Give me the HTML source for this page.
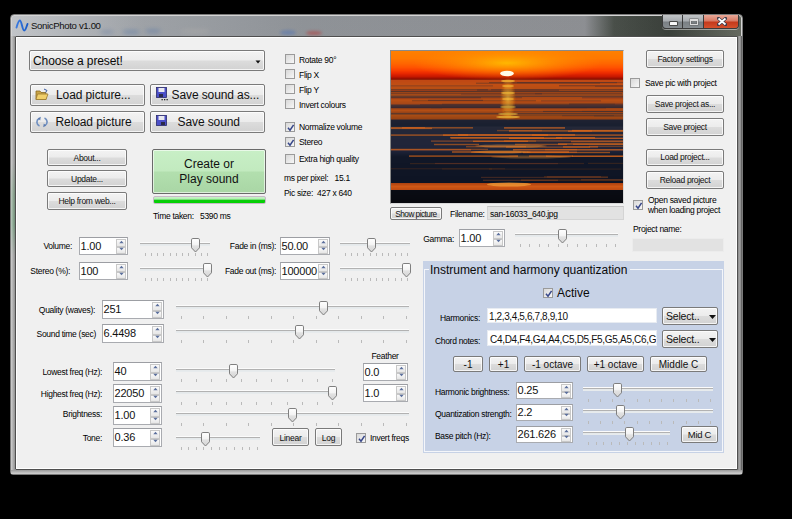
<!DOCTYPE html><html><head><meta charset="utf-8"><title>SonicPhoto</title><style>
*{margin:0;padding:0;box-sizing:border-box}
html,body{width:792px;height:519px;overflow:hidden;background:#000}
body{position:relative;font-family:"Liberation Sans",sans-serif;color:#000}
.a{position:absolute}
.t{position:absolute;font-size:8.5px;letter-spacing:-0.3px;white-space:nowrap;line-height:10px;color:#000;padding-top:1px}
.btn{position:absolute;border:1px solid #7a7a7a;border-radius:2px;
 background:linear-gradient(#f3f3f3 0%,#ececec 48%,#dcdcdc 52%,#d2d2d2 100%);
 box-shadow:inset 0 0 0 1px rgba(255,255,255,.75);
 text-align:center;white-space:nowrap;color:#111;font-size:8.5px;letter-spacing:-0.3px}
.big{font-size:12px;letter-spacing:-0.1px}
.cb{position:absolute;width:10px;height:10px;border:1px solid #9a9a9a;
 background:linear-gradient(135deg,#d8d8d8,#f7f7f7)}
.cb svg{position:absolute;left:0;top:0}
.spin{position:absolute;border:1px solid #a9abb0;border-top-color:#9c9ea3;background:#fff;overflow:hidden}
.spin .v{position:absolute;left:0.5px;font-size:12px;white-space:nowrap;color:#111}
.sb{position:absolute;right:1px;width:10px;border:1px solid #c8c8c8;background:linear-gradient(#fafafa,#e6e6e6)}
.tr{position:absolute;height:4px;background:linear-gradient(#fbfbfb 0%,#fbfbfb 25%,#b2b2b2 25%,#b2b2b2 50%,#e4e8ea 50%,#e8ecee 100%)}
.tk{position:absolute;width:1px;height:3px;background:#bababa}
</style></head><body>
<svg width="0" height="0" style="position:absolute"><defs><linearGradient id="tg" x1="0" y1="0" x2="0" y2="1"><stop offset="0" stop-color="#ffffff"/><stop offset="0.45" stop-color="#f4f4f4"/><stop offset="0.55" stop-color="#e2e2e2"/><stop offset="1" stop-color="#d4d4d4"/></linearGradient></defs></svg>
<div class="a" style="left:10px;top:14px;width:733px;height:461px;border-radius:4px 4px 3px 3px;
background:linear-gradient(rgba(0,0,0,.04),rgba(255,255,255,.06)),linear-gradient(90deg,#c9ccd0 0%,#a4a8ad 18%,#94989d 40%,#929498 78.5%,#4c524c 82.5%,#3c423c 90%,#6a6e64 100%);
border:1px solid #7a7a7a;box-shadow:inset 0 0 0 1px #d4d4d4"></div>
<div class="a" style="left:11px;top:36px;width:4px;height:438px;background:linear-gradient(90deg,rgba(255,255,255,.45),rgba(255,255,255,.1) 50%,rgba(0,0,0,.12)),linear-gradient(#a6a6a6 0%,#a6a6a6 29%,#88a08c 36%,#80a088 43%,#a6a6a6 50%,#a8a8a8 100%)"></div>
<div class="a" style="left:738px;top:36px;width:4px;height:438px;background:linear-gradient(90deg,#8a8a8a,#a8a8a8 50%,#505050)"></div>
<div class="a" style="left:11px;top:470px;width:731px;height:4px;background:linear-gradient(#9a9a9a,#bdbdbd 60%,#d0d0d0)"></div>
<div class="a" style="left:15px;top:36px;width:723px;height:434px;border:1px solid #4f4f4f;border-radius:1px;background:#f0f0f0;box-shadow:inset 0 0 0 1px #fff"></div>
<div class="a" style="left:100px;top:29px;width:200px;height:7px;filter:blur(2px);opacity:.7"><div class="a" style="left:0;top:1px;width:14px;height:4px;background:#7f8fa8;border-radius:50%"></div><div class="a" style="left:22px;top:1px;width:18px;height:4px;background:#6f86a8;border-radius:50%"></div><div class="a" style="left:45px;top:0px;width:16px;height:4px;background:#6e84a6;border-radius:50%"></div><div class="a" style="left:80px;top:0px;width:30px;height:5px;background:#a8a8a8;border-radius:50%"></div></div>
<div class="a" style="left:270px;top:28px;width:60px;height:8px;filter:blur(1.5px);opacity:.6"><div class="a" style="left:10px;top:2px;width:16px;height:5px;background:#5a78b0;border-radius:50%"></div><div class="a" style="left:36px;top:3px;width:16px;height:4px;background:#b04040;border-radius:50%"></div></div>
<svg class="a" style="left:14px;top:18px" width="16" height="16" viewBox="0 0 16 16">
<defs><linearGradient id="ig" x1="0" y1="0" x2="1" y2="0"><stop offset="0" stop-color="#3a7ae0"/><stop offset="1" stop-color="#1a5cc8"/></linearGradient></defs><path d="M2.5,9.5 C3.5,6 4.5,2.5 5.8,2.5 C7.8,2.5 8.2,12.5 10.2,12.5 C11.5,12.5 12.5,8.5 13.5,6" fill="none" stroke="url(#ig)" stroke-width="1.9" stroke-linecap="round"/></svg>
<div class="t" style="left:31px;top:19px;font-size:9.6px;letter-spacing:-0.35px;color:#101010;line-height:12px">SonicPhoto v1.00</div>
<div class="a" style="left:662px;top:15px;width:77px;height:14px;border:1px solid #3a3a3a;border-top:none;border-radius:0 0 4px 4px;overflow:hidden;box-shadow:0 1px 0 rgba(255,255,255,.45)">
<div class="a" style="left:0;top:0;width:20px;height:13px;background:linear-gradient(#c0c4c6 0%,#a8acb0 45%,#7a8084 55%,#868c90 100%);border-right:1px solid #3a3a3a"></div>
<div class="a" style="left:20px;top:0;width:21px;height:13px;background:linear-gradient(#c0c4c6 0%,#a8acb0 45%,#7a8084 55%,#868c90 100%);border-right:1px solid #3a3a3a"></div>
<div class="a" style="left:41px;top:0;width:36px;height:13px;background:linear-gradient(#e8a898 0%,#d87a64 45%,#c43a1c 55%,#d4502c 100%)"></div>
<div class="a" style="left:7px;top:7px;width:7px;height:2.5px;background:#f8f8f8;border-radius:0.5px;box-shadow:0 0 0 1px #4a4a4a"></div>
<div class="a" style="left:26.5px;top:3.5px;width:8.5px;height:6px;border:1.5px solid #dcdcdc;border-top-width:2px;box-shadow:0 0 0 0.5px #666, inset 0 0 0 0.5px #666"></div>
<svg class="a" style="left:54px;top:2px" width="10" height="9" viewBox="0 0 10 9"><path d="M1.5,1.5 L8.5,7.5 M8.5,1.5 L1.5,7.5" stroke="#3a3a4a" stroke-width="3.2" stroke-linecap="square"/><path d="M1.5,1.5 L8.5,7.5 M8.5,1.5 L1.5,7.5" stroke="#fff" stroke-width="1.8"/></svg>
</div>
<div class="btn" style="left:29px;top:50px;width:236px;height:21px;text-align:left;font-size:12px;letter-spacing:-0.1px;line-height:20.5px;padding-left:3px;color:#0a0a0a">Choose a preset!
<svg class="a" style="left:225px;top:8.5px" width="6" height="4"><path d="M0.5,0.5 H5.5 L3,3.5z" fill="#111"/></svg></div>
<div class="btn big" style="left:30px;top:84px;width:115px;height:22px;line-height:20px;text-align:left;padding-left:25px">Load picture...</div>
<div class="btn big" style="left:30px;top:111px;width:115px;height:22px;line-height:20px;text-align:left;padding-left:24.5px">Reload picture</div>
<div class="btn big" style="left:150px;top:84px;width:115px;height:22px;line-height:20px;text-align:left;padding-left:20.5px">Save sound as...</div>
<div class="btn big" style="left:150px;top:111px;width:115px;height:22px;line-height:20px;text-align:left;padding-left:26.5px">Save sound</div>
<svg class="a" style="left:35px;top:88px" width="14" height="13" viewBox="0 0 14 13">
<path d="M1,3 H5 L6,4.5 H11 V11.5 H1 Z" fill="#c9a448" stroke="#8a6a20" stroke-width="0.8"/>
<path d="M2.5,6 H13 L11,11.5 H1 Z" fill="#f0cf6a" stroke="#9a7a30" stroke-width="0.8"/>
<path d="M9,1 L12,2.5 L10.5,4.5" fill="none" stroke="#3a5aa0" stroke-width="1"/></svg>
<svg class="a" style="left:36px;top:116px" width="12" height="12" viewBox="0 0 12 12">
<path d="M3,2.5 A4.2,4.2 0 0 0 3.5,10" fill="none" stroke="#6f8fc0" stroke-width="1.6"/>
<path d="M9,9.5 A4.2,4.2 0 0 0 8.5,2" fill="none" stroke="#6f8fc0" stroke-width="1.6"/>
<path d="M4.8,0.8 L2,2.2 L4.2,4.6z M7.2,11.2 L10,9.8 L7.8,7.4z" fill="#5a7ab0"/></svg>
<svg class="a" style="left:156px;top:87px" width="14" height="14" viewBox="0 0 14 14">
<rect x="0.5" y="0.5" width="10" height="10" fill="#4b4fc8" stroke="#2a2a6a" stroke-width="0.8"/>
<rect x="2.5" y="1" width="6" height="4" fill="#e8e8f0"/><rect x="3" y="7" width="4" height="3" fill="#2a2a4a"/>
<rect x="8" y="12" width="1.3" height="1.3" fill="#222"/><rect x="10.5" y="12" width="1.3" height="1.3" fill="#222"/><rect x="5.5" y="12" width="1.3" height="1.3" fill="#222"/></svg>
<svg class="a" style="left:156px;top:115px" width="12" height="12" viewBox="0 0 12 12">
<rect x="0.5" y="0.5" width="10" height="10" fill="#4b4fc8" stroke="#2a2a6a" stroke-width="0.8"/>
<rect x="2.5" y="1" width="6" height="4" fill="#e8e8f0"/><rect x="5" y="7" width="4" height="3" fill="#2a2a4a"/></svg>
<div class="btn " style="left:47px;top:149px;width:80px;height:17px;line-height:15px;line-height:16.5px">About...</div>
<div class="btn " style="left:47px;top:170px;width:80px;height:17px;line-height:15px;line-height:16.5px">Update...</div>
<div class="btn " style="left:47px;top:192px;width:80px;height:18px;line-height:16px;line-height:17.5px">Help from web...</div>
<div class="a" style="left:152px;top:149px;width:114px;height:45px;border:1px solid #6a6a6a;border-radius:2px;
background:linear-gradient(#c8efc6 0%,#c2eabf 48%,#b2dfae 52%,#a9d6a5 100%);box-shadow:inset 0 0 0 1px rgba(255,255,255,.6);
text-align:center;font-size:12px;line-height:15px;color:#111;padding-top:7px">Create or<br>Play sound</div>
<div class="a" style="left:153px;top:196px;width:113px;height:8px;border:1px solid #c8b8c8;border-radius:2px;background:linear-gradient(#c8f4c8 0%,#b0ecb0 40%,#10c810 45%,#00d400 100%)"></div>
<div class="t" style="left:153px;top:210px;">Time taken: &nbsp; 5390 ms</div>
<div class="cb" style="left:285px;top:54px"></div>
<div class="t" style="left:299px;top:54px;">Rotate 90°</div>
<div class="cb" style="left:285px;top:69px"></div>
<div class="t" style="left:299px;top:69px;">Flip X</div>
<div class="cb" style="left:285px;top:84px"></div>
<div class="t" style="left:299px;top:84px;">Flip Y</div>
<div class="cb" style="left:285px;top:99px"></div>
<div class="t" style="left:299px;top:99px;">Invert colours</div>
<div class="cb" style="left:285px;top:122px"><svg width="10" height="10" viewBox="0 0 10 10"><path d="M2,4.8 L4,7.2 L7.6,1.8" fill="none" stroke="#37478a" stroke-width="1.5"/></svg></div>
<div class="t" style="left:299px;top:121px;">Normalize volume</div>
<div class="cb" style="left:285px;top:137px"><svg width="10" height="10" viewBox="0 0 10 10"><path d="M2,4.8 L4,7.2 L7.6,1.8" fill="none" stroke="#37478a" stroke-width="1.5"/></svg></div>
<div class="t" style="left:299px;top:136px;">Stereo</div>
<div class="cb" style="left:285px;top:154px"></div>
<div class="t" style="left:299px;top:153px;">Extra high quality</div>
<div class="t" style="left:284px;top:172px;">ms per pixel: &nbsp; 15.1</div>
<div class="t" style="left:284px;top:187px;">Pic size: &nbsp;427 x 640</div>
<div class="a" style="left:390px;top:50px;width:234px;height:154px;border:1px solid #8a8a8a;border-right-color:#d8d8d8;border-bottom-color:#d8d8d8;background:#000"></div>
<svg class="a" style="left:391px;top:51px" width="232" height="152" viewBox="0 0 232 152" shape-rendering="crispEdges"><rect x="0" y="0" width="232" height="1" fill="#ff8000"/><rect x="0" y="1" width="232" height="1" fill="#ff7e00"/><rect x="0" y="2" width="232" height="1" fill="#ff7d00"/><rect x="0" y="3" width="232" height="1" fill="#ff7c00"/><rect x="0" y="4" width="232" height="1" fill="#ff7b00"/><rect x="0" y="5" width="232" height="1" fill="#ff7a00"/><rect x="0" y="6" width="232" height="1" fill="#ff7900"/><rect x="0" y="7" width="232" height="1" fill="#ff7800"/><rect x="0" y="8" width="232" height="1" fill="#ff7400"/><rect x="0" y="9" width="232" height="1" fill="#ff7000"/><rect x="0" y="10" width="232" height="1" fill="#ff6d00"/><rect x="0" y="11" width="232" height="1" fill="#ff6900"/><rect x="0" y="12" width="232" height="1" fill="#ff6600"/><rect x="0" y="13" width="232" height="1" fill="#ff6100"/><rect x="0" y="14" width="232" height="1" fill="#ff5c00"/><rect x="0" y="15" width="232" height="1" fill="#ff5700"/><rect x="0" y="16" width="232" height="1" fill="#ff5200"/><rect x="0" y="17" width="232" height="1" fill="#fd4b00"/><rect x="0" y="18" width="232" height="1" fill="#fb4400"/><rect x="0" y="19" width="232" height="1" fill="#fa3e00"/><rect x="0" y="20" width="232" height="1" fill="#f43600"/><rect x="0" y="21" width="232" height="1" fill="#ee2f00"/><rect x="0" y="22" width="232" height="1" fill="#e82800"/><rect x="0" y="23" width="232" height="1" fill="#dd2200"/><rect x="0" y="24" width="232" height="1" fill="#d21d00"/><rect x="0" y="25" width="232" height="1" fill="#c81800"/><rect x="0" y="26" width="232" height="1" fill="#b01400"/><rect x="0" y="27" width="232" height="1" fill="#981000"/><rect x="0" y="28" width="232" height="1" fill="#902008"/><rect x="0" y="29" width="232" height="1" fill="#c04814"/><rect x="0" y="30" width="232" height="1" fill="#c04914"/><rect x="0" y="31" width="232" height="1" fill="#c04b14"/><rect x="0" y="32" width="232" height="1" fill="#c04c14"/><rect x="0" y="33" width="232" height="1" fill="#c04e14"/><rect x="0" y="34" width="232" height="1" fill="#be4e14"/><rect x="0" y="35" width="232" height="1" fill="#bc4e14"/><rect x="0" y="36" width="232" height="1" fill="#ba4e14"/><rect x="0" y="37" width="232" height="1" fill="#b84e14"/><rect x="0" y="38" width="232" height="1" fill="#ac4916"/><rect x="0" y="39" width="232" height="1" fill="#a04418"/><rect x="0" y="40" width="232" height="1" fill="#5a3428"/><rect x="0" y="41" width="232" height="1" fill="#9a4418"/><rect x="0" y="42" width="232" height="1" fill="#a94a16"/><rect x="0" y="43" width="232" height="1" fill="#b85014"/><rect x="0" y="44" width="232" height="1" fill="#91451e"/><rect x="0" y="45" width="232" height="1" fill="#6a3a28"/><rect x="0" y="46" width="232" height="1" fill="#a84818"/><rect x="0" y="47" width="232" height="1" fill="#ad4a16"/><rect x="0" y="48" width="232" height="1" fill="#b24c15"/><rect x="0" y="49" width="232" height="1" fill="#b84e14"/><rect x="0" y="50" width="232" height="1" fill="#b24c15"/><rect x="0" y="51" width="232" height="1" fill="#ad4a16"/><rect x="0" y="52" width="232" height="1" fill="#a84818"/><rect x="0" y="53" width="232" height="1" fill="#793c24"/><rect x="0" y="54" width="232" height="1" fill="#4a3030"/><rect x="0" y="55" width="232" height="1" fill="#422d30"/><rect x="0" y="56" width="232" height="1" fill="#3a2a30"/><rect x="0" y="57" width="232" height="1" fill="#9a4418"/><rect x="0" y="58" width="232" height="1" fill="#a74916"/><rect x="0" y="59" width="232" height="1" fill="#b44e14"/><rect x="0" y="60" width="232" height="1" fill="#a64916"/><rect x="0" y="61" width="232" height="1" fill="#984418"/><rect x="0" y="62" width="232" height="1" fill="#603828"/><rect x="0" y="63" width="232" height="1" fill="#84421e"/><rect x="0" y="64" width="232" height="1" fill="#a84c14"/><rect x="0" y="65" width="232" height="1" fill="#a24914"/><rect x="0" y="66" width="232" height="1" fill="#9d4614"/><rect x="0" y="67" width="232" height="1" fill="#984414"/><rect x="0" y="68" width="232" height="1" fill="#603424"/><rect x="0" y="69" width="232" height="1" fill="#1e2232"/><rect x="0" y="70" width="232" height="1" fill="#1d2131"/><rect x="0" y="71" width="232" height="1" fill="#1c2131"/><rect x="0" y="72" width="232" height="1" fill="#1b2030"/><rect x="0" y="73" width="232" height="1" fill="#1a2030"/><rect x="0" y="74" width="232" height="1" fill="#1a2030"/><rect x="0" y="75" width="232" height="1" fill="#1f2434"/><rect x="0" y="76" width="232" height="1" fill="#242838"/><rect x="0" y="77" width="232" height="1" fill="#232738"/><rect x="0" y="78" width="232" height="1" fill="#232738"/><rect x="0" y="79" width="232" height="1" fill="#232738"/><rect x="0" y="80" width="232" height="1" fill="#232738"/><rect x="0" y="81" width="232" height="1" fill="#232738"/><rect x="0" y="82" width="232" height="1" fill="#222638"/><rect x="0" y="83" width="232" height="1" fill="#222638"/><rect x="0" y="84" width="232" height="1" fill="#222638"/><rect x="0" y="85" width="232" height="1" fill="#222638"/><rect x="0" y="86" width="232" height="1" fill="#222638"/><rect x="0" y="87" width="232" height="1" fill="#222638"/><rect x="0" y="88" width="232" height="1" fill="#212539"/><rect x="0" y="89" width="232" height="1" fill="#212539"/><rect x="0" y="90" width="232" height="1" fill="#212539"/><rect x="0" y="91" width="232" height="1" fill="#212539"/><rect x="0" y="92" width="232" height="1" fill="#212539"/><rect x="0" y="93" width="232" height="1" fill="#212539"/><rect x="0" y="94" width="232" height="1" fill="#202439"/><rect x="0" y="95" width="232" height="1" fill="#202439"/><rect x="0" y="96" width="232" height="1" fill="#202439"/><rect x="0" y="97" width="232" height="1" fill="#202439"/><rect x="0" y="98" width="232" height="1" fill="#202439"/><rect x="0" y="99" width="232" height="1" fill="#20243a"/><rect x="0" y="100" width="232" height="1" fill="#1d2237"/><rect x="0" y="101" width="232" height="1" fill="#1b2034"/><rect x="0" y="102" width="232" height="1" fill="#191e31"/><rect x="0" y="103" width="232" height="1" fill="#161c2e"/><rect x="0" y="104" width="232" height="1" fill="#141a2b"/><rect x="0" y="105" width="232" height="1" fill="#121828"/><rect x="0" y="106" width="232" height="1" fill="#111727"/><rect x="0" y="107" width="232" height="1" fill="#111727"/><rect x="0" y="108" width="232" height="1" fill="#111727"/><rect x="0" y="109" width="232" height="1" fill="#111727"/><rect x="0" y="110" width="232" height="1" fill="#111727"/><rect x="0" y="111" width="232" height="1" fill="#111727"/><rect x="0" y="112" width="232" height="1" fill="#101626"/><rect x="0" y="113" width="232" height="1" fill="#101626"/><rect x="0" y="114" width="232" height="1" fill="#101626"/><rect x="0" y="115" width="232" height="1" fill="#101626"/><rect x="0" y="116" width="232" height="1" fill="#101626"/><rect x="0" y="117" width="232" height="1" fill="#101626"/><rect x="0" y="118" width="232" height="1" fill="#101626"/><rect x="0" y="119" width="232" height="1" fill="#0f1525"/><rect x="0" y="120" width="232" height="1" fill="#0f1525"/><rect x="0" y="121" width="232" height="1" fill="#0f1525"/><rect x="0" y="122" width="232" height="1" fill="#0f1525"/><rect x="0" y="123" width="232" height="1" fill="#0f1525"/><rect x="0" y="124" width="232" height="1" fill="#0f1525"/><rect x="0" y="125" width="232" height="1" fill="#0e1424"/><rect x="0" y="126" width="232" height="1" fill="#0e1424"/><rect x="0" y="127" width="232" height="1" fill="#0e1424"/><rect x="0" y="128" width="232" height="1" fill="#0e1424"/><rect x="0" y="129" width="232" height="1" fill="#0e1424"/><rect x="0" y="130" width="232" height="1" fill="#0e1424"/><rect x="0" y="131" width="232" height="1" fill="#0e1424"/><rect x="0" y="132" width="232" height="1" fill="#b04410"/><rect x="0" y="133" width="232" height="1" fill="#ba4a12"/><rect x="0" y="134" width="232" height="1" fill="#c55114"/><rect x="0" y="135" width="232" height="1" fill="#d05816"/><rect x="0" y="136" width="232" height="1" fill="#ca5414"/><rect x="0" y="137" width="232" height="1" fill="#c55013"/><rect x="0" y="138" width="232" height="1" fill="#c04c12"/><rect x="0" y="139" width="232" height="1" fill="#0a0c14"/><rect x="0" y="140" width="232" height="1" fill="#090b13"/><rect x="0" y="141" width="232" height="1" fill="#090b13"/><rect x="0" y="142" width="232" height="1" fill="#090b12"/><rect x="0" y="143" width="232" height="1" fill="#090b12"/><rect x="0" y="144" width="232" height="1" fill="#090a11"/><rect x="0" y="145" width="232" height="1" fill="#090a11"/><rect x="0" y="146" width="232" height="1" fill="#080a11"/><rect x="0" y="147" width="232" height="1" fill="#080a10"/><rect x="0" y="148" width="232" height="1" fill="#080910"/><rect x="0" y="149" width="232" height="1" fill="#08090f"/><rect x="0" y="150" width="232" height="1" fill="#08090f"/><rect x="0" y="151" width="232" height="1" fill="#08090f"/></svg>
<svg class="a" style="left:391px;top:51px" width="232" height="152" viewBox="0 0 232 152"><defs>
<radialGradient id="sunglow" cx="0.5" cy="0.5" r="0.5"><stop offset="0" stop-color="#ffc000" stop-opacity="0.9"/><stop offset="0.5" stop-color="#ffa000" stop-opacity="0.5"/><stop offset="1" stop-color="#ff9000" stop-opacity="0"/></radialGradient>
<radialGradient id="refl" cx="0.5" cy="0.5" r="0.5"><stop offset="0" stop-color="#ffd040" stop-opacity="1"/><stop offset="0.6" stop-color="#ffb020" stop-opacity="0.6"/><stop offset="1" stop-color="#ff9000" stop-opacity="0"/></radialGradient>
<linearGradient id="hg" x1="0" y1="0" x2="1" y2="0"><stop offset="0" stop-color="#e06018" stop-opacity="0.35"/><stop offset="0.5" stop-color="#f07018" stop-opacity="0.9"/><stop offset="1" stop-color="#e06018" stop-opacity="0.45"/></linearGradient>
<filter id="bl" x="-5%" y="-50%" width="110%" height="200%"><feGaussianBlur stdDeviation="0.5"/></filter>
</defs><g filter="url(#bl)"><ellipse cx="116" cy="12" rx="95" ry="17" fill="url(#sunglow)"/><rect x="85" y="31.7" width="124" height="1" fill="#3a2a30" opacity="0.4664125175249433"/><rect x="98" y="31.1" width="128" height="1" fill="#3a2a30" opacity="0.47797715976045135"/><rect x="126" y="31.1" width="159" height="1" fill="#3a2a30" opacity="0.42585031565613135"/><rect x="168" y="34.3" width="144" height="1" fill="#3a2a30" opacity="0.5955483551996945"/><rect x="204" y="34.8" width="138" height="1" fill="#3a2a30" opacity="0.3893735237850406"/><rect x="-17" y="34.4" width="119" height="1" fill="#3a2a30" opacity="0.39755206569948226"/><rect x="-13" y="38.2" width="110" height="1" fill="#3a2a30" opacity="0.560606782129633"/><rect x="100" y="38.2" width="136" height="1" fill="#3a2a30" opacity="0.515612382972592"/><rect x="86" y="38.6" width="82" height="1" fill="#3a2a30" opacity="0.5989229104140498"/><rect x="144" y="42.2" width="87" height="1" fill="#3a2a30" opacity="0.4222599868285505"/><rect x="-4" y="42.3" width="155" height="1" fill="#3a2a30" opacity="0.5616459054702947"/><rect x="70" y="42.7" width="184" height="1" fill="#3a2a30" opacity="0.3501362342638926"/><rect x="191" y="46.2" width="110" height="1" fill="#3a2a30" opacity="0.44935609701982027"/><rect x="-3" y="46.1" width="134" height="1" fill="#3a2a30" opacity="0.4174438967125357"/><rect x="0" y="46.2" width="90" height="1" fill="#3a2a30" opacity="0.5395101292484397"/><rect x="37" y="48.8" width="55" height="1" fill="#3a2a30" opacity="0.5492553779609934"/><rect x="21" y="49.2" width="124" height="1" fill="#3a2a30" opacity="0.3976711038225915"/><rect x="150" y="49.3" width="60" height="1" fill="#3a2a30" opacity="0.37912699690992635"/><rect x="29" y="53.3" width="80" height="1" fill="#3a2a30" opacity="0.5508528757705178"/><rect x="51" y="52.7" width="173" height="1" fill="#3a2a30" opacity="0.4485686592680136"/><rect x="178" y="52.6" width="136" height="1" fill="#3a2a30" opacity="0.5973254243775431"/><rect x="40" y="56.2" width="156" height="1" fill="#3a2a30" opacity="0.4240811906497366"/><rect x="-3" y="56.4" width="54" height="1" fill="#3a2a30" opacity="0.41075323003439057"/><rect x="119" y="56.3" width="96" height="1" fill="#3a2a30" opacity="0.5897836681218283"/><rect x="113" y="59.9" width="170" height="1" fill="#3a2a30" opacity="0.3885338297315152"/><rect x="191" y="59.9" width="163" height="1" fill="#3a2a30" opacity="0.397450166490815"/><rect x="152" y="59.9" width="181" height="1" fill="#3a2a30" opacity="0.5875339630771613"/><rect x="120" y="64.1" width="103" height="1" fill="#3a2a30" opacity="0.3596741179234456"/><rect x="203" y="64.6" width="76" height="1" fill="#3a2a30" opacity="0.41424534958007797"/><rect x="171" y="64.2" width="129" height="1" fill="#3a2a30" opacity="0.3938583491914648"/><rect x="-14" y="76.7" width="55" height="1.4" fill="#e26a1a" opacity="0.5737465371296036"/><rect x="113" y="76.2" width="61" height="1.4" fill="#e26a1a" opacity="0.7169440713970301"/><rect x="-26" y="76.0" width="60" height="1.4" fill="#e26a1a" opacity="0.5282822079928637"/><rect x="11" y="76.1" width="71" height="1.4" fill="#e26a1a" opacity="0.5788677691610608"/><rect x="177" y="79.5" width="138" height="1.4" fill="#e26a1a" opacity="0.6127728186038288"/><rect x="106" y="78.9" width="45" height="1.4" fill="#e26a1a" opacity="0.3640322146522622"/><rect x="181" y="78.9" width="107" height="1.4" fill="#e26a1a" opacity="0.7351084054516013"/><rect x="118" y="79.2" width="83" height="1.4" fill="#e26a1a" opacity="0.6421991923781127"/><rect x="-13" y="83.4" width="90" height="1.4" fill="#e26a1a" opacity="0.6448021979465035"/><rect x="141" y="83.4" width="107" height="1.4" fill="#e26a1a" opacity="0.6673066704373936"/><rect x="52" y="83.4" width="105" height="1.4" fill="#e26a1a" opacity="0.7103343757321515"/><rect x="67" y="83.2" width="117" height="1.4" fill="#e26a1a" opacity="0.695389069616573"/><rect x="59" y="86.0" width="94" height="1.4" fill="#e26a1a" opacity="0.5935467602975639"/><rect x="118" y="86.6" width="139" height="1.4" fill="#e26a1a" opacity="0.7019167316444107"/><rect x="60" y="86.3" width="111" height="1.4" fill="#e26a1a" opacity="0.5823811514906758"/><rect x="165" y="86.0" width="39" height="1.4" fill="#e26a1a" opacity="0.6500840709046463"/><rect x="82" y="89.6" width="55" height="1.4" fill="#e26a1a" opacity="0.6293338719394354"/><rect x="113" y="89.2" width="131" height="1.4" fill="#e26a1a" opacity="0.4523320880425526"/><rect x="40" y="89.4" width="105" height="1.4" fill="#e26a1a" opacity="0.4310297653627235"/><rect x="180" y="89.9" width="103" height="1.4" fill="#e26a1a" opacity="0.5267729923078747"/><rect x="124" y="92.7" width="52" height="1.4" fill="#e26a1a" opacity="0.5223581129423193"/><rect x="182" y="92.5" width="127" height="1.4" fill="#e26a1a" opacity="0.5037674731599612"/><rect x="43" y="92.8" width="45" height="1.4" fill="#e26a1a" opacity="0.5485868166409288"/><rect x="167" y="92.3" width="108" height="1.4" fill="#e26a1a" opacity="0.730000060738206"/><rect x="75" y="95.0" width="60" height="1.4" fill="#e26a1a" opacity="0.43563215086131135"/><rect x="115" y="95.4" width="84" height="1.4" fill="#e26a1a" opacity="0.4761486581452983"/><rect x="198" y="94.7" width="80" height="1.4" fill="#e26a1a" opacity="0.3798716867826204"/><rect x="172" y="95.2" width="35" height="1.4" fill="#e26a1a" opacity="0.6334523716004798"/><rect x="154" y="97.9" width="32" height="1.4" fill="#e26a1a" opacity="0.404352463499275"/><rect x="-24" y="97.7" width="121" height="1.4" fill="#e26a1a" opacity="0.4449636035539337"/><rect x="-19" y="98.1" width="99" height="1.4" fill="#e26a1a" opacity="0.528592306700409"/><rect x="122" y="98.1" width="119" height="1.4" fill="#e26a1a" opacity="0.7333842607676041"/><rect x="80" y="100.6" width="50" height="1.4" fill="#e26a1a" opacity="0.35430666731313154"/><rect x="136" y="100.5" width="50" height="1.4" fill="#e26a1a" opacity="0.45894197457606745"/><rect x="132" y="100.8" width="87" height="1.4" fill="#e26a1a" opacity="0.5957790672683977"/><rect x="61" y="100.3" width="117" height="1.4" fill="#e26a1a" opacity="0.7124947942016209"/><rect x="138" y="104.4" width="44" height="1.4" fill="#e26a1a" opacity="0.5314144617226026"/><rect x="181" y="104.6" width="71" height="1.4" fill="#e26a1a" opacity="0.5775256176372581"/><rect x="155" y="104.5" width="134" height="1.4" fill="#e26a1a" opacity="0.5354830930425742"/><rect x="18" y="104.4" width="109" height="1.4" fill="#e26a1a" opacity="0.6773382151076386"/><rect x="19" y="112.0" width="148" height="1.2" fill="#d06018" opacity="0.18"/><rect x="197" y="111.8" width="104" height="1.2" fill="#d06018" opacity="0.18"/><rect x="44" y="111.9" width="149" height="1.2" fill="#d06018" opacity="0.18"/><rect x="51" y="117.4" width="50" height="1.2" fill="#d06018" opacity="0.15"/><rect x="98" y="117.5" width="132" height="1.2" fill="#d06018" opacity="0.15"/><rect x="-23" y="117.1" width="137" height="1.2" fill="#d06018" opacity="0.15"/><rect x="156" y="125.3" width="61" height="1.2" fill="#d06018" opacity="0.25"/><rect x="153" y="125.1" width="57" height="1.2" fill="#d06018" opacity="0.25"/><rect x="90" y="125.8" width="127" height="1.2" fill="#d06018" opacity="0.25"/><rect x="130" y="128.5" width="153" height="1.2" fill="#d06018" opacity="0.3"/><rect x="190" y="128.2" width="50" height="1.2" fill="#d06018" opacity="0.3"/><rect x="92" y="128.7" width="75" height="1.2" fill="#d06018" opacity="0.3"/><ellipse cx="117" cy="48" rx="8" ry="22" fill="url(#refl)" opacity="0.6"/><ellipse cx="117" cy="30" rx="7" ry="1.3" fill="#ffd040" opacity="0.6"/><ellipse cx="117" cy="35" rx="6" ry="1.3" fill="#ffd040" opacity="0.5"/><ellipse cx="117" cy="42" rx="7" ry="1.3" fill="#ffd040" opacity="0.5"/><ellipse cx="117" cy="48" rx="6" ry="1.3" fill="#ffd040" opacity="0.4"/><ellipse cx="117" cy="56" rx="8" ry="1.3" fill="#ffd040" opacity="0.4"/><ellipse cx="117" cy="63" rx="10" ry="1.3" fill="#ffd040" opacity="0.5"/><ellipse cx="117" cy="66" rx="12" ry="1.3" fill="#ffd040" opacity="0.6"/><ellipse cx="120" cy="95" rx="36" ry="1.6" fill="#ff9a30" opacity="0.45"/><ellipse cx="110" cy="101" rx="30" ry="1.5" fill="#ff9a30" opacity="0.4"/><ellipse cx="140" cy="106" rx="40" ry="1.5" fill="#ff9a30" opacity="0.35"/><ellipse cx="118" cy="133.5" rx="22" ry="2" fill="#ffb040" opacity="0.6"/></g><ellipse cx="116" cy="22.5" rx="6.8" ry="2.7" fill="#fffce8"/></svg>
<div class="btn " style="left:390px;top:207px;width:52px;height:13px;line-height:11px;font-size:8.3px;letter-spacing:-0.55px;line-height:12.5px">Show picture</div>
<div class="t" style="left:450px;top:208px;">Filename:</div>
<div class="a" style="left:487px;top:206px;width:137px;height:14px;background:#e2e2e2;border:1px solid #d4d4d4;border-top-color:#c4c4c4"></div>
<div class="t" style="left:490px;top:208px;">san-16033_640.jpg</div>
<div class="btn " style="left:646px;top:50px;width:78px;height:18px;line-height:16px;">Factory settings</div>
<div class="cb" style="left:630px;top:78px"></div>
<div class="t" style="left:645px;top:76.5px;">Save pic with project</div>
<div class="btn " style="left:646px;top:95px;width:78px;height:18px;line-height:16px;">Save project as...</div>
<div class="btn " style="left:646px;top:118px;width:78px;height:18px;line-height:16px;">Save project</div>
<div class="btn " style="left:646px;top:149px;width:78px;height:17px;line-height:15px;">Load project...</div>
<div class="btn " style="left:646px;top:171px;width:78px;height:18px;line-height:16px;">Reload project</div>
<div class="cb" style="left:633px;top:200px"><svg width="10" height="10" viewBox="0 0 10 10"><path d="M2,4.8 L4,7.2 L7.6,1.8" fill="none" stroke="#37478a" stroke-width="1.5"/></svg></div>
<div class="t" style="left:648px;top:193.5px;">Open saved picture</div>
<div class="t" style="left:648px;top:203.5px;">when loading project</div>
<div class="t" style="left:633px;top:223px;">Project name:</div>
<div class="a" style="left:632px;top:238px;width:92px;height:14px;background:#e2e2e2;border:1px solid #ececec"></div>
<div class="t" style="left:-128px;width:200px;text-align:right;top:240px;">Volume:</div>
<div class="spin" style="left:79px;top:237px;width:49px;height:18px">
<div class="v" style="top:1.7px;font-size:11px;letter-spacing:-0.2px;">1.00</div>
<div class="sb" style="top:1px;height:8.0px"></div>
<div class="sb" style="top:9.0px;height:7.0px"></div>
<svg class="a" style="right:3px;top:1.8px" width="5" height="4"><path d="M0.3,3.2 L2.5,0.8 L4.7,3.2z" fill="#5a6e9c"/></svg>
<svg class="a" style="right:3px;top:9.1px" width="5" height="4"><path d="M0.3,0.8 L2.5,3.2 L4.7,0.8z" fill="#5a6e9c"/></svg>
</div>
<div class="t" style="left:-130px;width:200px;text-align:right;top:265px;">Stereo (%):</div>
<div class="spin" style="left:79px;top:262px;width:49px;height:18px">
<div class="v" style="top:1.7px;font-size:11px;letter-spacing:-0.2px;">100</div>
<div class="sb" style="top:1px;height:8.0px"></div>
<div class="sb" style="top:9.0px;height:7.0px"></div>
<svg class="a" style="right:3px;top:1.8px" width="5" height="4"><path d="M0.3,3.2 L2.5,0.8 L4.7,3.2z" fill="#5a6e9c"/></svg>
<svg class="a" style="right:3px;top:9.1px" width="5" height="4"><path d="M0.3,0.8 L2.5,3.2 L4.7,0.8z" fill="#5a6e9c"/></svg>
</div>
<div class="tr" style="left:140px;top:241.5px;width:70px"></div>
<div class="tk" style="left:144.5px;top:253px"></div>
<div class="tk" style="left:150.8px;top:253px"></div>
<div class="tk" style="left:157.0px;top:253px"></div>
<div class="tk" style="left:163.2px;top:253px"></div>
<div class="tk" style="left:169.5px;top:253px"></div>
<div class="tk" style="left:175.8px;top:253px"></div>
<div class="tk" style="left:182.0px;top:253px"></div>
<div class="tk" style="left:188.2px;top:253px"></div>
<div class="tk" style="left:194.5px;top:253px"></div>
<div class="tk" style="left:200.8px;top:253px"></div>
<div class="tk" style="left:207.0px;top:253px"></div>
<svg class="a" style="left:190.8px;top:237.5px" width="9" height="15" viewBox="0 0 9 15"><path d="M0.5,1.8 Q0.5,0.5 1.8,0.5 H7.2 Q8.5,0.5 8.5,1.8 V9.8 L4.5,14 L0.5,9.8 Z" fill="url(#tg)" stroke="#7f7f7f" stroke-width="1"/></svg>
<div class="tr" style="left:140px;top:266.5px;width:70px"></div>
<div class="tk" style="left:144.5px;top:278px"></div>
<div class="tk" style="left:150.8px;top:278px"></div>
<div class="tk" style="left:157.0px;top:278px"></div>
<div class="tk" style="left:163.2px;top:278px"></div>
<div class="tk" style="left:169.5px;top:278px"></div>
<div class="tk" style="left:175.8px;top:278px"></div>
<div class="tk" style="left:182.0px;top:278px"></div>
<div class="tk" style="left:188.2px;top:278px"></div>
<div class="tk" style="left:194.5px;top:278px"></div>
<div class="tk" style="left:200.8px;top:278px"></div>
<div class="tk" style="left:207.0px;top:278px"></div>
<svg class="a" style="left:202.5px;top:262.5px" width="9" height="15" viewBox="0 0 9 15"><path d="M0.5,1.8 Q0.5,0.5 1.8,0.5 H7.2 Q8.5,0.5 8.5,1.8 V9.8 L4.5,14 L0.5,9.8 Z" fill="url(#tg)" stroke="#7f7f7f" stroke-width="1"/></svg>
<div class="t" style="left:76px;width:200px;text-align:right;top:240px;">Fade in (ms):</div>
<div class="spin" style="left:280px;top:237px;width:50px;height:18px">
<div class="v" style="top:1.7px;font-size:11px;letter-spacing:-0.2px;">50.00</div>
<div class="sb" style="top:1px;height:8.0px"></div>
<div class="sb" style="top:9.0px;height:7.0px"></div>
<svg class="a" style="right:3px;top:1.8px" width="5" height="4"><path d="M0.3,3.2 L2.5,0.8 L4.7,3.2z" fill="#5a6e9c"/></svg>
<svg class="a" style="right:3px;top:9.1px" width="5" height="4"><path d="M0.3,0.8 L2.5,3.2 L4.7,0.8z" fill="#5a6e9c"/></svg>
</div>
<div class="t" style="left:76px;width:200px;text-align:right;top:265px;">Fade out (ms):</div>
<div class="spin" style="left:280px;top:262px;width:50px;height:18px">
<div class="v" style="top:1.7px;font-size:11px;letter-spacing:-0.2px;">100000</div>
<div class="sb" style="top:1px;height:8.0px"></div>
<div class="sb" style="top:9.0px;height:7.0px"></div>
<svg class="a" style="right:3px;top:1.8px" width="5" height="4"><path d="M0.3,3.2 L2.5,0.8 L4.7,3.2z" fill="#5a6e9c"/></svg>
<svg class="a" style="right:3px;top:9.1px" width="5" height="4"><path d="M0.3,0.8 L2.5,3.2 L4.7,0.8z" fill="#5a6e9c"/></svg>
</div>
<div class="tr" style="left:340px;top:241.5px;width:70px"></div>
<div class="tk" style="left:344.5px;top:253px"></div>
<div class="tk" style="left:350.8px;top:253px"></div>
<div class="tk" style="left:357.0px;top:253px"></div>
<div class="tk" style="left:363.2px;top:253px"></div>
<div class="tk" style="left:369.5px;top:253px"></div>
<div class="tk" style="left:375.8px;top:253px"></div>
<div class="tk" style="left:382.0px;top:253px"></div>
<div class="tk" style="left:388.2px;top:253px"></div>
<div class="tk" style="left:394.5px;top:253px"></div>
<div class="tk" style="left:400.8px;top:253px"></div>
<div class="tk" style="left:407.0px;top:253px"></div>
<svg class="a" style="left:366.5px;top:237.5px" width="9" height="15" viewBox="0 0 9 15"><path d="M0.5,1.8 Q0.5,0.5 1.8,0.5 H7.2 Q8.5,0.5 8.5,1.8 V9.8 L4.5,14 L0.5,9.8 Z" fill="url(#tg)" stroke="#7f7f7f" stroke-width="1"/></svg>
<div class="tr" style="left:340px;top:266.5px;width:70px"></div>
<div class="tk" style="left:344.5px;top:278px"></div>
<div class="tk" style="left:350.8px;top:278px"></div>
<div class="tk" style="left:357.0px;top:278px"></div>
<div class="tk" style="left:363.2px;top:278px"></div>
<div class="tk" style="left:369.5px;top:278px"></div>
<div class="tk" style="left:375.8px;top:278px"></div>
<div class="tk" style="left:382.0px;top:278px"></div>
<div class="tk" style="left:388.2px;top:278px"></div>
<div class="tk" style="left:394.5px;top:278px"></div>
<div class="tk" style="left:400.8px;top:278px"></div>
<div class="tk" style="left:407.0px;top:278px"></div>
<svg class="a" style="left:401.5px;top:262.5px" width="9" height="15" viewBox="0 0 9 15"><path d="M0.5,1.8 Q0.5,0.5 1.8,0.5 H7.2 Q8.5,0.5 8.5,1.8 V9.8 L4.5,14 L0.5,9.8 Z" fill="url(#tg)" stroke="#7f7f7f" stroke-width="1"/></svg>
<div class="t" style="left:254px;width:200px;text-align:right;top:233px;">Gamma:</div>
<div class="spin" style="left:459px;top:229px;width:46px;height:18px">
<div class="v" style="top:1.7px;font-size:11px;letter-spacing:-0.2px;">1.00</div>
<div class="sb" style="top:1px;height:8.0px"></div>
<div class="sb" style="top:9.0px;height:7.0px"></div>
<svg class="a" style="right:3px;top:1.8px" width="5" height="4"><path d="M0.3,3.2 L2.5,0.8 L4.7,3.2z" fill="#5a6e9c"/></svg>
<svg class="a" style="right:3px;top:9.1px" width="5" height="4"><path d="M0.3,0.8 L2.5,3.2 L4.7,0.8z" fill="#5a6e9c"/></svg>
</div>
<div class="tr" style="left:515px;top:232.5px;width:103px"></div>
<div class="tk" style="left:519.5px;top:244px"></div>
<div class="tk" style="left:529.0px;top:244px"></div>
<div class="tk" style="left:538.6px;top:244px"></div>
<div class="tk" style="left:548.1px;top:244px"></div>
<div class="tk" style="left:557.7px;top:244px"></div>
<div class="tk" style="left:567.2px;top:244px"></div>
<div class="tk" style="left:576.8px;top:244px"></div>
<div class="tk" style="left:586.4px;top:244px"></div>
<div class="tk" style="left:595.9px;top:244px"></div>
<div class="tk" style="left:605.5px;top:244px"></div>
<div class="tk" style="left:615.0px;top:244px"></div>
<svg class="a" style="left:557.5px;top:228.5px" width="9" height="15" viewBox="0 0 9 15"><path d="M0.5,1.8 Q0.5,0.5 1.8,0.5 H7.2 Q8.5,0.5 8.5,1.8 V9.8 L4.5,14 L0.5,9.8 Z" fill="url(#tg)" stroke="#7f7f7f" stroke-width="1"/></svg>
<div class="t" style="left:-105px;width:200px;text-align:right;top:304px;">Quality (waves):</div>
<div class="spin" style="left:102px;top:300px;width:62px;height:19px">
<div class="v" style="top:2.2px;font-size:11px;letter-spacing:-0.2px;">251</div>
<div class="sb" style="top:1px;height:8.5px"></div>
<div class="sb" style="top:9.5px;height:7.5px"></div>
<svg class="a" style="right:3px;top:2.0px" width="5" height="4"><path d="M0.3,3.2 L2.5,0.8 L4.7,3.2z" fill="#5a6e9c"/></svg>
<svg class="a" style="right:3px;top:9.7px" width="5" height="4"><path d="M0.3,0.8 L2.5,3.2 L4.7,0.8z" fill="#5a6e9c"/></svg>
</div>
<div class="t" style="left:-104px;width:200px;text-align:right;top:328px;">Sound time (sec)</div>
<div class="spin" style="left:102px;top:324px;width:62px;height:19px">
<div class="v" style="top:2.2px;font-size:11px;letter-spacing:-0.2px;">6.4498</div>
<div class="sb" style="top:1px;height:8.5px"></div>
<div class="sb" style="top:9.5px;height:7.5px"></div>
<svg class="a" style="right:3px;top:2.0px" width="5" height="4"><path d="M0.3,3.2 L2.5,0.8 L4.7,3.2z" fill="#5a6e9c"/></svg>
<svg class="a" style="right:3px;top:9.7px" width="5" height="4"><path d="M0.3,0.8 L2.5,3.2 L4.7,0.8z" fill="#5a6e9c"/></svg>
</div>
<div class="tr" style="left:176px;top:304.5px;width:233px"></div>
<div class="tk" style="left:180.5px;top:316px"></div>
<div class="tk" style="left:203.1px;top:316px"></div>
<div class="tk" style="left:225.6px;top:316px"></div>
<div class="tk" style="left:248.2px;top:316px"></div>
<div class="tk" style="left:270.7px;top:316px"></div>
<div class="tk" style="left:293.2px;top:316px"></div>
<div class="tk" style="left:315.8px;top:316px"></div>
<div class="tk" style="left:338.4px;top:316px"></div>
<div class="tk" style="left:360.9px;top:316px"></div>
<div class="tk" style="left:383.4px;top:316px"></div>
<div class="tk" style="left:406.0px;top:316px"></div>
<svg class="a" style="left:318.5px;top:300.5px" width="9" height="15" viewBox="0 0 9 15"><path d="M0.5,1.8 Q0.5,0.5 1.8,0.5 H7.2 Q8.5,0.5 8.5,1.8 V9.8 L4.5,14 L0.5,9.8 Z" fill="url(#tg)" stroke="#7f7f7f" stroke-width="1"/></svg>
<div class="tr" style="left:176px;top:328.5px;width:233px"></div>
<div class="tk" style="left:180.5px;top:340px"></div>
<div class="tk" style="left:203.1px;top:340px"></div>
<div class="tk" style="left:225.6px;top:340px"></div>
<div class="tk" style="left:248.2px;top:340px"></div>
<div class="tk" style="left:270.7px;top:340px"></div>
<div class="tk" style="left:293.2px;top:340px"></div>
<div class="tk" style="left:315.8px;top:340px"></div>
<div class="tk" style="left:338.4px;top:340px"></div>
<div class="tk" style="left:360.9px;top:340px"></div>
<div class="tk" style="left:383.4px;top:340px"></div>
<div class="tk" style="left:406.0px;top:340px"></div>
<svg class="a" style="left:294.9px;top:324.5px" width="9" height="15" viewBox="0 0 9 15"><path d="M0.5,1.8 Q0.5,0.5 1.8,0.5 H7.2 Q8.5,0.5 8.5,1.8 V9.8 L4.5,14 L0.5,9.8 Z" fill="url(#tg)" stroke="#7f7f7f" stroke-width="1"/></svg>
<div class="t" style="left:-98px;width:200px;text-align:right;top:366px;">Lowest freq (Hz):</div>
<div class="spin" style="left:113px;top:362px;width:49px;height:19px">
<div class="v" style="top:2.2px;font-size:11px;letter-spacing:-0.2px;">40</div>
<div class="sb" style="top:1px;height:8.5px"></div>
<div class="sb" style="top:9.5px;height:7.5px"></div>
<svg class="a" style="right:3px;top:2.0px" width="5" height="4"><path d="M0.3,3.2 L2.5,0.8 L4.7,3.2z" fill="#5a6e9c"/></svg>
<svg class="a" style="right:3px;top:9.7px" width="5" height="4"><path d="M0.3,0.8 L2.5,3.2 L4.7,0.8z" fill="#5a6e9c"/></svg>
</div>
<div class="t" style="left:-98px;width:200px;text-align:right;top:388px;">Highest freq (Hz):</div>
<div class="spin" style="left:113px;top:384px;width:49px;height:19px">
<div class="v" style="top:2.2px;font-size:11px;letter-spacing:-0.2px;">22050</div>
<div class="sb" style="top:1px;height:8.5px"></div>
<div class="sb" style="top:9.5px;height:7.5px"></div>
<svg class="a" style="right:3px;top:2.0px" width="5" height="4"><path d="M0.3,3.2 L2.5,0.8 L4.7,3.2z" fill="#5a6e9c"/></svg>
<svg class="a" style="right:3px;top:9.7px" width="5" height="4"><path d="M0.3,0.8 L2.5,3.2 L4.7,0.8z" fill="#5a6e9c"/></svg>
</div>
<div class="t" style="left:-98px;width:200px;text-align:right;top:408px;">Brightness:</div>
<div class="spin" style="left:113px;top:406px;width:49px;height:19px">
<div class="v" style="top:2.2px;font-size:11px;letter-spacing:-0.2px;">1.00</div>
<div class="sb" style="top:1px;height:8.5px"></div>
<div class="sb" style="top:9.5px;height:7.5px"></div>
<svg class="a" style="right:3px;top:2.0px" width="5" height="4"><path d="M0.3,3.2 L2.5,0.8 L4.7,3.2z" fill="#5a6e9c"/></svg>
<svg class="a" style="right:3px;top:9.7px" width="5" height="4"><path d="M0.3,0.8 L2.5,3.2 L4.7,0.8z" fill="#5a6e9c"/></svg>
</div>
<div class="t" style="left:-98px;width:200px;text-align:right;top:432px;">Tone:</div>
<div class="spin" style="left:113px;top:428px;width:49px;height:19px">
<div class="v" style="top:2.2px;font-size:11px;letter-spacing:-0.2px;">0.36</div>
<div class="sb" style="top:1px;height:8.5px"></div>
<div class="sb" style="top:9.5px;height:7.5px"></div>
<svg class="a" style="right:3px;top:2.0px" width="5" height="4"><path d="M0.3,3.2 L2.5,0.8 L4.7,3.2z" fill="#5a6e9c"/></svg>
<svg class="a" style="right:3px;top:9.7px" width="5" height="4"><path d="M0.3,0.8 L2.5,3.2 L4.7,0.8z" fill="#5a6e9c"/></svg>
</div>
<div class="tr" style="left:176px;top:367.5px;width:159px"></div>
<div class="tk" style="left:180.5px;top:379px"></div>
<div class="tk" style="left:195.7px;top:379px"></div>
<div class="tk" style="left:210.8px;top:379px"></div>
<div class="tk" style="left:225.9px;top:379px"></div>
<div class="tk" style="left:241.1px;top:379px"></div>
<div class="tk" style="left:256.2px;top:379px"></div>
<div class="tk" style="left:271.4px;top:379px"></div>
<div class="tk" style="left:286.6px;top:379px"></div>
<div class="tk" style="left:301.7px;top:379px"></div>
<div class="tk" style="left:316.9px;top:379px"></div>
<div class="tk" style="left:332.0px;top:379px"></div>
<svg class="a" style="left:229.3px;top:363.5px" width="9" height="15" viewBox="0 0 9 15"><path d="M0.5,1.8 Q0.5,0.5 1.8,0.5 H7.2 Q8.5,0.5 8.5,1.8 V9.8 L4.5,14 L0.5,9.8 Z" fill="url(#tg)" stroke="#7f7f7f" stroke-width="1"/></svg>
<div class="tr" style="left:176px;top:390.1px;width:159px"></div>
<div class="tk" style="left:180.5px;top:401.6px"></div>
<div class="tk" style="left:195.7px;top:401.6px"></div>
<div class="tk" style="left:210.8px;top:401.6px"></div>
<div class="tk" style="left:225.9px;top:401.6px"></div>
<div class="tk" style="left:241.1px;top:401.6px"></div>
<div class="tk" style="left:256.2px;top:401.6px"></div>
<div class="tk" style="left:271.4px;top:401.6px"></div>
<div class="tk" style="left:286.6px;top:401.6px"></div>
<div class="tk" style="left:301.7px;top:401.6px"></div>
<div class="tk" style="left:316.9px;top:401.6px"></div>
<div class="tk" style="left:332.0px;top:401.6px"></div>
<svg class="a" style="left:327.7px;top:386.1px" width="9" height="15" viewBox="0 0 9 15"><path d="M0.5,1.8 Q0.5,0.5 1.8,0.5 H7.2 Q8.5,0.5 8.5,1.8 V9.8 L4.5,14 L0.5,9.8 Z" fill="url(#tg)" stroke="#7f7f7f" stroke-width="1"/></svg>
<div class="tr" style="left:176px;top:411.5px;width:233px"></div>
<div class="tk" style="left:180.5px;top:423px"></div>
<div class="tk" style="left:203.1px;top:423px"></div>
<div class="tk" style="left:225.6px;top:423px"></div>
<div class="tk" style="left:248.2px;top:423px"></div>
<div class="tk" style="left:270.7px;top:423px"></div>
<div class="tk" style="left:293.2px;top:423px"></div>
<div class="tk" style="left:315.8px;top:423px"></div>
<div class="tk" style="left:338.4px;top:423px"></div>
<div class="tk" style="left:360.9px;top:423px"></div>
<div class="tk" style="left:383.4px;top:423px"></div>
<div class="tk" style="left:406.0px;top:423px"></div>
<svg class="a" style="left:287.7px;top:407.5px" width="9" height="15" viewBox="0 0 9 15"><path d="M0.5,1.8 Q0.5,0.5 1.8,0.5 H7.2 Q8.5,0.5 8.5,1.8 V9.8 L4.5,14 L0.5,9.8 Z" fill="url(#tg)" stroke="#7f7f7f" stroke-width="1"/></svg>
<div class="tr" style="left:176px;top:435.5px;width:84px"></div>
<div class="tk" style="left:180.5px;top:447px"></div>
<div class="tk" style="left:188.2px;top:447px"></div>
<div class="tk" style="left:195.8px;top:447px"></div>
<div class="tk" style="left:203.4px;top:447px"></div>
<div class="tk" style="left:211.1px;top:447px"></div>
<div class="tk" style="left:218.8px;top:447px"></div>
<div class="tk" style="left:226.4px;top:447px"></div>
<div class="tk" style="left:234.1px;top:447px"></div>
<div class="tk" style="left:241.7px;top:447px"></div>
<div class="tk" style="left:249.3px;top:447px"></div>
<div class="tk" style="left:257.0px;top:447px"></div>
<svg class="a" style="left:200.5px;top:431.5px" width="9" height="15" viewBox="0 0 9 15"><path d="M0.5,1.8 Q0.5,0.5 1.8,0.5 H7.2 Q8.5,0.5 8.5,1.8 V9.8 L4.5,14 L0.5,9.8 Z" fill="url(#tg)" stroke="#7f7f7f" stroke-width="1"/></svg>
<div class="t" style="left:355px;width:60px;text-align:center;top:350px">Feather</div>
<div class="spin" style="left:363px;top:363px;width:45px;height:18px">
<div class="v" style="top:1.7px;font-size:11px;letter-spacing:-0.2px;">0.0</div>
<div class="sb" style="top:1px;height:8.0px"></div>
<div class="sb" style="top:9.0px;height:7.0px"></div>
<svg class="a" style="right:3px;top:1.8px" width="5" height="4"><path d="M0.3,3.2 L2.5,0.8 L4.7,3.2z" fill="#5a6e9c"/></svg>
<svg class="a" style="right:3px;top:9.1px" width="5" height="4"><path d="M0.3,0.8 L2.5,3.2 L4.7,0.8z" fill="#5a6e9c"/></svg>
</div>
<div class="spin" style="left:363px;top:384px;width:45px;height:18px">
<div class="v" style="top:1.7px;font-size:11px;letter-spacing:-0.2px;">1.0</div>
<div class="sb" style="top:1px;height:8.0px"></div>
<div class="sb" style="top:9.0px;height:7.0px"></div>
<svg class="a" style="right:3px;top:1.8px" width="5" height="4"><path d="M0.3,3.2 L2.5,0.8 L4.7,3.2z" fill="#5a6e9c"/></svg>
<svg class="a" style="right:3px;top:9.1px" width="5" height="4"><path d="M0.3,0.8 L2.5,3.2 L4.7,0.8z" fill="#5a6e9c"/></svg>
</div>
<div class="btn " style="left:272px;top:428px;width:37px;height:18px;line-height:16px;line-height:18px">Linear</div>
<div class="btn " style="left:315px;top:428px;width:27px;height:18px;line-height:16px;line-height:18px">Log</div>
<div class="cb" style="left:356px;top:433px"><svg width="10" height="10" viewBox="0 0 10 10"><path d="M2,4.8 L4,7.2 L7.6,1.8" fill="none" stroke="#37478a" stroke-width="1.5"/></svg></div>
<div class="t" style="left:370px;top:432px;">Invert freqs</div>
<div class="a" style="left:423px;top:261px;width:301px;height:192px;background:#c7d2e6"></div>
<div class="a" style="left:424px;top:269px;width:299px;height:183px;border:1px solid #f4f6fa;border-top:none"></div>
<div class="a" style="left:424px;top:269px;width:5px;height:1px;background:#f4f6fa"></div>
<div class="a" style="left:630px;top:269px;width:93px;height:1px;background:#f4f6fa"></div>
<div class="t" style="left:430px;top:262px;font-size:12px;letter-spacing:-0.02px;line-height:14px;color:#0a0a0a">Instrument and harmony quantization</div>
<div class="cb" style="left:543px;top:288px"><svg width="10" height="10" viewBox="0 0 10 10"><path d="M2,4.8 L4,7.2 L7.6,1.8" fill="none" stroke="#37478a" stroke-width="1.5"/></svg></div>
<div class="t" style="left:557px;top:284.5px;font-size:12px;letter-spacing:0;line-height:14px;color:#0a0a0a">Active</div>
<div class="t" style="left:280px;width:200px;text-align:right;top:312px;">Harmonics:</div>
<div class="t" style="left:280px;width:200px;text-align:right;top:335px;">Chord notes:</div>
<div class="a" style="left:487px;top:308px;width:170px;height:15px;background:#fff;border:1px solid #e8ecf2"></div>
<div class="t" style="left:489px;top:310px;font-size:10px;letter-spacing:-0.38px;line-height:12px;color:#111">1,2,3,4,5,6,7,8,9,10</div>
<div class="a" style="left:487px;top:330px;width:170px;height:16px;background:#fff;border:1px solid #e8ecf2;overflow:hidden"><div class="t" style="left:2px;top:2px;font-size:10px;letter-spacing:-0.31px;line-height:12px;color:#111">C4,D4,F4,G4,A4,C5,D5,F5,G5,A5,C6,G</div></div>
<div class="btn" style="left:662px;top:307px;width:56px;height:18px;text-align:left;padding-left:3px;font-size:10.5px;letter-spacing:-0.2px;line-height:17px">Select..
<svg class="a" style="left:46px;top:7px" width="7" height="4"><path d="M0,0 H7 L3.5,4z" fill="#111"/></svg></div>
<div class="btn" style="left:662px;top:330px;width:56px;height:18px;text-align:left;padding-left:3px;font-size:10.5px;letter-spacing:-0.2px;line-height:17px">Select..
<svg class="a" style="left:46px;top:7px" width="7" height="4"><path d="M0,0 H7 L3.5,4z" fill="#111"/></svg></div>
<div class="btn " style="left:453px;top:356px;width:30px;height:16px;line-height:14px;font-size:10px;letter-spacing:0;line-height:15px">-1</div>
<div class="btn " style="left:489px;top:356px;width:29px;height:16px;line-height:14px;font-size:10px;letter-spacing:0;line-height:15px">+1</div>
<div class="btn " style="left:524px;top:356px;width:57px;height:16px;line-height:14px;font-size:10px;letter-spacing:0;line-height:15px">-1 octave</div>
<div class="btn " style="left:587px;top:356px;width:57px;height:16px;line-height:14px;font-size:10px;letter-spacing:0;line-height:15px">+1 octave</div>
<div class="btn " style="left:650px;top:356px;width:57px;height:16px;line-height:14px;font-size:10px;letter-spacing:0;line-height:15px">Middle C</div>
<div class="t" style="left:435px;top:386px;">Harmonic brightness:</div>
<div class="spin" style="left:516px;top:382px;width:57px;height:17px">
<div class="v" style="top:1.2px;font-size:11px;letter-spacing:-0.2px;">0.25</div>
<div class="sb" style="top:1px;height:7.5px"></div>
<div class="sb" style="top:8.5px;height:6.5px"></div>
<svg class="a" style="right:3px;top:1.6px" width="5" height="4"><path d="M0.3,3.2 L2.5,0.8 L4.7,3.2z" fill="#5a6e9c"/></svg>
<svg class="a" style="right:3px;top:8.4px" width="5" height="4"><path d="M0.3,0.8 L2.5,3.2 L4.7,0.8z" fill="#5a6e9c"/></svg>
</div>
<div class="t" style="left:435px;top:408px;">Quantization strength:</div>
<div class="spin" style="left:516px;top:404px;width:57px;height:17px">
<div class="v" style="top:1.2px;font-size:11px;letter-spacing:-0.2px;">2.2</div>
<div class="sb" style="top:1px;height:7.5px"></div>
<div class="sb" style="top:8.5px;height:6.5px"></div>
<svg class="a" style="right:3px;top:1.6px" width="5" height="4"><path d="M0.3,3.2 L2.5,0.8 L4.7,3.2z" fill="#5a6e9c"/></svg>
<svg class="a" style="right:3px;top:8.4px" width="5" height="4"><path d="M0.3,0.8 L2.5,3.2 L4.7,0.8z" fill="#5a6e9c"/></svg>
</div>
<div class="t" style="left:435px;top:430px;">Base pitch (Hz):</div>
<div class="spin" style="left:516px;top:426px;width:57px;height:17px">
<div class="v" style="top:1.2px;font-size:11px;letter-spacing:-0.2px;">261.626</div>
<div class="sb" style="top:1px;height:7.5px"></div>
<div class="sb" style="top:8.5px;height:6.5px"></div>
<svg class="a" style="right:3px;top:1.6px" width="5" height="4"><path d="M0.3,3.2 L2.5,0.8 L4.7,3.2z" fill="#5a6e9c"/></svg>
<svg class="a" style="right:3px;top:8.4px" width="5" height="4"><path d="M0.3,0.8 L2.5,3.2 L4.7,0.8z" fill="#5a6e9c"/></svg>
</div>
<div class="tr" style="left:583px;top:387.1px;width:130px"></div>
<div class="tk" style="left:587.5px;top:398.6px"></div>
<div class="tk" style="left:599.8px;top:398.6px"></div>
<div class="tk" style="left:612.0px;top:398.6px"></div>
<div class="tk" style="left:624.2px;top:398.6px"></div>
<div class="tk" style="left:636.5px;top:398.6px"></div>
<div class="tk" style="left:648.8px;top:398.6px"></div>
<div class="tk" style="left:661.0px;top:398.6px"></div>
<div class="tk" style="left:673.2px;top:398.6px"></div>
<div class="tk" style="left:685.5px;top:398.6px"></div>
<div class="tk" style="left:697.8px;top:398.6px"></div>
<div class="tk" style="left:710.0px;top:398.6px"></div>
<svg class="a" style="left:613.2px;top:383.1px" width="9" height="15" viewBox="0 0 9 15"><path d="M0.5,1.8 Q0.5,0.5 1.8,0.5 H7.2 Q8.5,0.5 8.5,1.8 V9.8 L4.5,14 L0.5,9.8 Z" fill="url(#tg)" stroke="#7f7f7f" stroke-width="1"/></svg>
<div class="tr" style="left:583px;top:409.2px;width:130px"></div>
<div class="tk" style="left:587.5px;top:420.7px"></div>
<div class="tk" style="left:599.8px;top:420.7px"></div>
<div class="tk" style="left:612.0px;top:420.7px"></div>
<div class="tk" style="left:624.2px;top:420.7px"></div>
<div class="tk" style="left:636.5px;top:420.7px"></div>
<div class="tk" style="left:648.8px;top:420.7px"></div>
<div class="tk" style="left:661.0px;top:420.7px"></div>
<div class="tk" style="left:673.2px;top:420.7px"></div>
<div class="tk" style="left:685.5px;top:420.7px"></div>
<div class="tk" style="left:697.8px;top:420.7px"></div>
<div class="tk" style="left:710.0px;top:420.7px"></div>
<svg class="a" style="left:615.5px;top:405.2px" width="9" height="15" viewBox="0 0 9 15"><path d="M0.5,1.8 Q0.5,0.5 1.8,0.5 H7.2 Q8.5,0.5 8.5,1.8 V9.8 L4.5,14 L0.5,9.8 Z" fill="url(#tg)" stroke="#7f7f7f" stroke-width="1"/></svg>
<div class="tr" style="left:583px;top:430.8px;width:87px"></div>
<div class="tk" style="left:587.5px;top:442.3px"></div>
<div class="tk" style="left:595.5px;top:442.3px"></div>
<div class="tk" style="left:603.4px;top:442.3px"></div>
<div class="tk" style="left:611.4px;top:442.3px"></div>
<div class="tk" style="left:619.3px;top:442.3px"></div>
<div class="tk" style="left:627.2px;top:442.3px"></div>
<div class="tk" style="left:635.2px;top:442.3px"></div>
<div class="tk" style="left:643.1px;top:442.3px"></div>
<div class="tk" style="left:651.1px;top:442.3px"></div>
<div class="tk" style="left:659.0px;top:442.3px"></div>
<div class="tk" style="left:667.0px;top:442.3px"></div>
<svg class="a" style="left:625.3px;top:426.8px" width="9" height="15" viewBox="0 0 9 15"><path d="M0.5,1.8 Q0.5,0.5 1.8,0.5 H7.2 Q8.5,0.5 8.5,1.8 V9.8 L4.5,14 L0.5,9.8 Z" fill="url(#tg)" stroke="#7f7f7f" stroke-width="1"/></svg>
<div class="btn " style="left:681px;top:426px;width:37px;height:17px;line-height:15px;font-size:9.5px;letter-spacing:-0.3px;line-height:15.5px">Mid C</div>
</body></html>
